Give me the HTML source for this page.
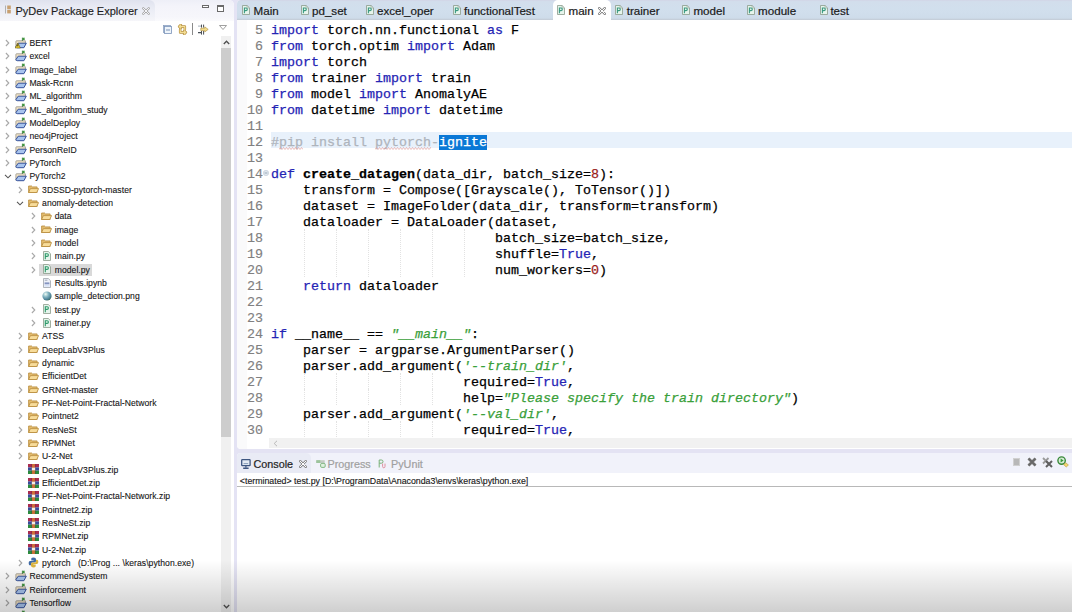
<!DOCTYPE html>
<html><head><meta charset="utf-8">
<style>
*{margin:0;padding:0;box-sizing:border-box}
html,body{width:1072px;height:612px;overflow:hidden;background:#e4e3f4}
body{position:relative;font-family:"Liberation Sans",sans-serif;color:#222}
.a{position:absolute}
svg{display:block}
.tt{font-size:11px;color:#1e1e1e;white-space:nowrap;line-height:12px;-webkit-text-stroke:.15px currentColor}
.tr{font-size:8.6px;color:#141414;white-space:nowrap;line-height:10px;-webkit-text-stroke:.1px #141414;letter-spacing:.05px}
.tab{font-size:11.6px;color:#1a1a1a;white-space:nowrap;line-height:12px;-webkit-text-stroke:.2px currentColor}
.ln{position:absolute;left:0;height:16px;line-height:16px;white-space:pre;font-family:"Liberation Mono",monospace;font-size:13.333px;color:#000;-webkit-text-stroke:.25px currentColor}
.num{color:#808080;-webkit-text-stroke:.15px #808080}
.kw{color:#2424b4}
.str{color:#3aa03a;font-style:italic}
.cm{color:#aeb4bc}
.nm{color:#9a1c1c}
.guide{position:absolute;width:0;border-left:1px dotted #e2e2e2}
</style></head><body>

<div class="a" style="left:0;top:0;width:234px;height:612px;background:#fff;border-top-right-radius:5px;overflow:hidden">
<div class="a" style="left:0;top:0;width:234px;height:21px;background:linear-gradient(#eeeff7,#f4f4fa 30%,#f6f6fb 80%,#fafafd)"></div>
<div class="a" style="left:0;top:0;width:155px;height:21px;background:linear-gradient(#dfe2ee,#e9ebf4 35%,#f1f2f8 80%,#f6f6fa);border-top-right-radius:6px"></div>
<svg class="a" style="left:5px;top:5px" width="6" height="9" viewBox="0 0 6 9"><rect x="0" y=".5" width="1" height="8" fill="#b0b0b0"/><rect x="2.2" y=".5" width="3.6" height="3.6" fill="#c8a070"/><rect x="2.2" y="4.8" width="3.6" height="3.6" fill="#c8a070"/></svg>
<div class="a tt" style="left:15.5px;top:5px">PyDev Package Explorer</div>
<svg class="a" style="left:142px;top:7px" width="8" height="8" viewBox="0 0 8 8"><path d="M1.2 1.2l5.6 5.6M6.8 1.2L1.2 6.8" stroke="#a8a8a8" stroke-width="2.2" stroke-linecap="round"/><path d="M1.2 1.2l5.6 5.6M6.8 1.2L1.2 6.8" stroke="#f4f4f8" stroke-width="1" stroke-linecap="round"/></svg>
<div class="a" style="left:202px;top:5px;width:7px;height:3px;border:1px solid #6a6a6a;background:#fff"></div>
<div class="a" style="left:217px;top:5px;width:7px;height:7px;border:1px solid #6a6a6a;border-top-width:2px;background:#fff"></div>
<svg class="a" style="left:163px;top:25px" width="9" height="9" viewBox="0 0 9 9"><rect x=".5" y=".5" width="7" height="7" fill="#dce8f4" stroke="#8aa0c0" stroke-width=".8"/><rect x="1.5" y="1.5" width="7" height="7" fill="#eef4fa" stroke="#7b93b8" stroke-width=".8"/><path d="M3 5h4" stroke="#7b93b8" stroke-width="1"/></svg>
<svg class="a" style="left:177px;top:23.5px" width="11" height="11" viewBox="0 0 11 11"><path d="M7.8 2.6H2.2M2.2 2.6l1.6-1.6M2.2 2.6l1.6 1.6M7.8 2.6v3M3.2 5.6v2.8M3.2 8.4h5.6M8.8 8.4l-1.6-1.6M8.8 8.4l-1.6 1.6" fill="none" stroke="#b8944a" stroke-width="2.6" stroke-linecap="round" stroke-linejoin="round"/><path d="M7.8 2.6H2.2M2.2 2.6l1.6-1.6M2.2 2.6l1.6 1.6M7.8 2.6v3M3.2 5.6v2.8M3.2 8.4h5.6M8.8 8.4l-1.6-1.6M8.8 8.4l-1.6 1.6" fill="none" stroke="#f4de94" stroke-width="1.2" stroke-linecap="round" stroke-linejoin="round"/></svg>
<div class="a" style="left:192px;top:23px;width:1px;height:12px;background:#8a8a8a"></div>
<svg class="a" style="left:198px;top:24px" width="11" height="11" viewBox="0 0 11 11"><path d="M0 2.2h4" stroke="#b8c0c8" stroke-width="1.2"/><path d="M0 8.6h4" stroke="#4a5058" stroke-width="1.2"/><path d="M3.5 .6v3M3.5 7v3.6M5.6 .6v3M5.6 7v3.6" stroke="#4a5058" stroke-width="1"/><path d="M2.8 4.2h4V2.9l3.4 2.5-3.4 2.5V6.6h-4z" fill="#f2dc8a" stroke="#b89a48" stroke-width=".7"/></svg>
<svg class="a" style="left:219px;top:25px" width="8" height="5" viewBox="0 0 8 5"><path d="M.5.5h7L4 4.5z" fill="#fff" stroke="#888" stroke-width=".8"/></svg>
<svg class="a" style="left:5.30px;top:39.15px" width="5" height="8" viewBox="0 0 5 8"><path d="M.9 1l2.9 3-2.9 3" fill="none" stroke="#a8a8a8" stroke-width="1.1"/></svg>
<div class="a" style="left:14.90px;top:36.55px"><svg width="12" height="12" viewBox="0 0 12 12"><path d="M.9 10.4V4.4q0-.6.6-.6h8.9v3" fill="#f3e4c4" stroke="#a09c94" stroke-width=".9"/><path d="M7.4 .7v3.2" stroke="#3a7a3a" stroke-width=".9"/><path d="M7.6 .7h2.4l-.6 1.2.6 1.2H7.6z" fill="#40963e"/><path d="M3.2 6.2h8.1l-2.4 4.5H2.2q-1.2 0-1.2-1.2z" fill="#a8c4ee" stroke="#34509a" stroke-width="1"/><path d="M2.8 6L5.4 11H.2z" fill="#f2d230" stroke="#6a5a10" stroke-width=".6"/><path d="M2.8 7.4v2" stroke="#222" stroke-width=".9"/></svg></div>
<div class="a tr" style="left:29.40px;top:37.95px">BERT</div>
<svg class="a" style="left:5.30px;top:52.48px" width="5" height="8" viewBox="0 0 5 8"><path d="M.9 1l2.9 3-2.9 3" fill="none" stroke="#a8a8a8" stroke-width="1.1"/></svg>
<div class="a" style="left:14.90px;top:49.88px"><svg width="12" height="12" viewBox="0 0 12 12"><path d="M.9 10.4V4.4q0-.6.6-.6h8.9v3" fill="#f3e4c4" stroke="#a09c94" stroke-width=".9"/><path d="M7.4 .7v3.2" stroke="#3a7a3a" stroke-width=".9"/><path d="M7.6 .7h2.4l-.6 1.2.6 1.2H7.6z" fill="#40963e"/><path d="M3.2 6.2h8.1l-2.4 4.5H2.2q-1.2 0-1.2-1.2z" fill="#a8c4ee" stroke="#34509a" stroke-width="1"/></svg></div>
<div class="a tr" style="left:29.40px;top:51.28px">excel</div>
<svg class="a" style="left:5.30px;top:65.82px" width="5" height="8" viewBox="0 0 5 8"><path d="M.9 1l2.9 3-2.9 3" fill="none" stroke="#a8a8a8" stroke-width="1.1"/></svg>
<div class="a" style="left:14.90px;top:63.22px"><svg width="12" height="12" viewBox="0 0 12 12"><path d="M.9 10.4V4.4q0-.6.6-.6h8.9v3" fill="#f3e4c4" stroke="#a09c94" stroke-width=".9"/><path d="M7.4 .7v3.2" stroke="#3a7a3a" stroke-width=".9"/><path d="M7.6 .7h2.4l-.6 1.2.6 1.2H7.6z" fill="#40963e"/><path d="M3.2 6.2h8.1l-2.4 4.5H2.2q-1.2 0-1.2-1.2z" fill="#a8c4ee" stroke="#34509a" stroke-width="1"/></svg></div>
<div class="a tr" style="left:29.40px;top:64.62px">Image_label</div>
<svg class="a" style="left:5.30px;top:79.15px" width="5" height="8" viewBox="0 0 5 8"><path d="M.9 1l2.9 3-2.9 3" fill="none" stroke="#a8a8a8" stroke-width="1.1"/></svg>
<div class="a" style="left:14.90px;top:76.55px"><svg width="12" height="12" viewBox="0 0 12 12"><path d="M.9 10.4V4.4q0-.6.6-.6h8.9v3" fill="#f3e4c4" stroke="#a09c94" stroke-width=".9"/><path d="M7.4 .7v3.2" stroke="#3a7a3a" stroke-width=".9"/><path d="M7.6 .7h2.4l-.6 1.2.6 1.2H7.6z" fill="#40963e"/><path d="M3.2 6.2h8.1l-2.4 4.5H2.2q-1.2 0-1.2-1.2z" fill="#a8c4ee" stroke="#34509a" stroke-width="1"/></svg></div>
<div class="a tr" style="left:29.40px;top:77.95px">Mask-Rcnn</div>
<svg class="a" style="left:5.30px;top:92.48px" width="5" height="8" viewBox="0 0 5 8"><path d="M.9 1l2.9 3-2.9 3" fill="none" stroke="#a8a8a8" stroke-width="1.1"/></svg>
<div class="a" style="left:14.90px;top:89.88px"><svg width="12" height="12" viewBox="0 0 12 12"><path d="M.9 10.4V4.4q0-.6.6-.6h8.9v3" fill="#f3e4c4" stroke="#a09c94" stroke-width=".9"/><path d="M7.4 .7v3.2" stroke="#3a7a3a" stroke-width=".9"/><path d="M7.6 .7h2.4l-.6 1.2.6 1.2H7.6z" fill="#40963e"/><path d="M3.2 6.2h8.1l-2.4 4.5H2.2q-1.2 0-1.2-1.2z" fill="#a8c4ee" stroke="#34509a" stroke-width="1"/></svg></div>
<div class="a tr" style="left:29.40px;top:91.28px">ML_algorithm</div>
<svg class="a" style="left:5.30px;top:105.82px" width="5" height="8" viewBox="0 0 5 8"><path d="M.9 1l2.9 3-2.9 3" fill="none" stroke="#a8a8a8" stroke-width="1.1"/></svg>
<div class="a" style="left:14.90px;top:103.22px"><svg width="12" height="12" viewBox="0 0 12 12"><path d="M.9 10.4V4.4q0-.6.6-.6h8.9v3" fill="#f3e4c4" stroke="#a09c94" stroke-width=".9"/><path d="M7.4 .7v3.2" stroke="#3a7a3a" stroke-width=".9"/><path d="M7.6 .7h2.4l-.6 1.2.6 1.2H7.6z" fill="#40963e"/><path d="M3.2 6.2h8.1l-2.4 4.5H2.2q-1.2 0-1.2-1.2z" fill="#a8c4ee" stroke="#34509a" stroke-width="1"/></svg></div>
<div class="a tr" style="left:29.40px;top:104.62px">ML_algorithm_study</div>
<svg class="a" style="left:5.30px;top:119.15px" width="5" height="8" viewBox="0 0 5 8"><path d="M.9 1l2.9 3-2.9 3" fill="none" stroke="#a8a8a8" stroke-width="1.1"/></svg>
<div class="a" style="left:14.90px;top:116.55px"><svg width="12" height="12" viewBox="0 0 12 12"><path d="M.9 10.4V4.4q0-.6.6-.6h8.9v3" fill="#f3e4c4" stroke="#a09c94" stroke-width=".9"/><path d="M7.4 .7v3.2" stroke="#3a7a3a" stroke-width=".9"/><path d="M7.6 .7h2.4l-.6 1.2.6 1.2H7.6z" fill="#40963e"/><path d="M3.2 6.2h8.1l-2.4 4.5H2.2q-1.2 0-1.2-1.2z" fill="#a8c4ee" stroke="#34509a" stroke-width="1"/></svg></div>
<div class="a tr" style="left:29.40px;top:117.95px">ModelDeploy</div>
<svg class="a" style="left:5.30px;top:132.48px" width="5" height="8" viewBox="0 0 5 8"><path d="M.9 1l2.9 3-2.9 3" fill="none" stroke="#a8a8a8" stroke-width="1.1"/></svg>
<div class="a" style="left:14.90px;top:129.88px"><svg width="12" height="12" viewBox="0 0 12 12"><path d="M.9 10.4V4.4q0-.6.6-.6h8.9v3" fill="#f3e4c4" stroke="#a09c94" stroke-width=".9"/><path d="M7.4 .7v3.2" stroke="#3a7a3a" stroke-width=".9"/><path d="M7.6 .7h2.4l-.6 1.2.6 1.2H7.6z" fill="#40963e"/><path d="M3.2 6.2h8.1l-2.4 4.5H2.2q-1.2 0-1.2-1.2z" fill="#a8c4ee" stroke="#34509a" stroke-width="1"/></svg></div>
<div class="a tr" style="left:29.40px;top:131.28px">neo4jProject</div>
<svg class="a" style="left:5.30px;top:145.81px" width="5" height="8" viewBox="0 0 5 8"><path d="M.9 1l2.9 3-2.9 3" fill="none" stroke="#a8a8a8" stroke-width="1.1"/></svg>
<div class="a" style="left:14.90px;top:143.21px"><svg width="12" height="12" viewBox="0 0 12 12"><path d="M.9 10.4V4.4q0-.6.6-.6h8.9v3" fill="#f3e4c4" stroke="#a09c94" stroke-width=".9"/><path d="M7.4 .7v3.2" stroke="#3a7a3a" stroke-width=".9"/><path d="M7.6 .7h2.4l-.6 1.2.6 1.2H7.6z" fill="#40963e"/><path d="M3.2 6.2h8.1l-2.4 4.5H2.2q-1.2 0-1.2-1.2z" fill="#a8c4ee" stroke="#34509a" stroke-width="1"/></svg></div>
<div class="a tr" style="left:29.40px;top:144.61px">PersonReID</div>
<svg class="a" style="left:5.30px;top:159.15px" width="5" height="8" viewBox="0 0 5 8"><path d="M.9 1l2.9 3-2.9 3" fill="none" stroke="#a8a8a8" stroke-width="1.1"/></svg>
<div class="a" style="left:14.90px;top:156.55px"><svg width="12" height="12" viewBox="0 0 12 12"><path d="M.9 10.4V4.4q0-.6.6-.6h8.9v3" fill="#f3e4c4" stroke="#a09c94" stroke-width=".9"/><path d="M7.4 .7v3.2" stroke="#3a7a3a" stroke-width=".9"/><path d="M7.6 .7h2.4l-.6 1.2.6 1.2H7.6z" fill="#40963e"/><path d="M3.2 6.2h8.1l-2.4 4.5H2.2q-1.2 0-1.2-1.2z" fill="#a8c4ee" stroke="#34509a" stroke-width="1"/></svg></div>
<div class="a tr" style="left:29.40px;top:157.95px">PyTorch</div>
<svg class="a" style="left:3.80px;top:173.88px" width="8" height="5" viewBox="0 0 8 5"><path d="M1 .9l3 2.9 3-2.9" fill="none" stroke="#555" stroke-width="1.1"/></svg>
<div class="a" style="left:14.90px;top:169.88px"><svg width="12" height="12" viewBox="0 0 12 12"><path d="M.9 10.4V4.4q0-.6.6-.6h8.9v3" fill="#f3e4c4" stroke="#a09c94" stroke-width=".9"/><path d="M7.4 .7v3.2" stroke="#3a7a3a" stroke-width=".9"/><path d="M7.6 .7h2.4l-.6 1.2.6 1.2H7.6z" fill="#40963e"/><path d="M3.2 6.2h8.1l-2.4 4.5H2.2q-1.2 0-1.2-1.2z" fill="#a8c4ee" stroke="#34509a" stroke-width="1"/></svg></div>
<div class="a tr" style="left:29.40px;top:171.28px">PyTorch2</div>
<svg class="a" style="left:17.95px;top:185.81px" width="5" height="8" viewBox="0 0 5 8"><path d="M.9 1l2.9 3-2.9 3" fill="none" stroke="#a8a8a8" stroke-width="1.1"/></svg>
<div class="a" style="left:28.45px;top:185.21px"><svg width="11" height="8" viewBox="0 0 11 8"><path d="M.6 1h3l.9.9h4.6v5.6H.6z" fill="#e2bb6e" stroke="#b88c3c" stroke-width=".8"/><path d="M2.4 3.6h8.2l-1.9 3.9H.6z" fill="#f7dc9a" stroke="#b88c3c" stroke-width=".8"/></svg></div>
<div class="a tr" style="left:42.05px;top:184.61px">3DSSD-pytorch-master</div>
<svg class="a" style="left:16.45px;top:200.55px" width="8" height="5" viewBox="0 0 8 5"><path d="M1 .9l3 2.9 3-2.9" fill="none" stroke="#555" stroke-width="1.1"/></svg>
<div class="a" style="left:28.45px;top:198.55px"><svg width="11" height="8" viewBox="0 0 11 8"><path d="M.6 1h3l.9.9h4.6v5.6H.6z" fill="#e2bb6e" stroke="#b88c3c" stroke-width=".8"/><path d="M2.4 3.6h8.2l-1.9 3.9H.6z" fill="#f7dc9a" stroke="#b88c3c" stroke-width=".8"/></svg></div>
<div class="a tr" style="left:42.05px;top:197.95px">anomaly-detection</div>
<svg class="a" style="left:30.60px;top:212.48px" width="5" height="8" viewBox="0 0 5 8"><path d="M.9 1l2.9 3-2.9 3" fill="none" stroke="#a8a8a8" stroke-width="1.1"/></svg>
<div class="a" style="left:41.10px;top:211.88px"><svg width="11" height="8" viewBox="0 0 11 8"><path d="M.6 1h3l.9.9h4.6v5.6H.6z" fill="#e2bb6e" stroke="#b88c3c" stroke-width=".8"/><path d="M2.4 3.6h8.2l-1.9 3.9H.6z" fill="#f7dc9a" stroke="#b88c3c" stroke-width=".8"/></svg></div>
<div class="a tr" style="left:54.70px;top:211.28px">data</div>
<svg class="a" style="left:30.60px;top:225.81px" width="5" height="8" viewBox="0 0 5 8"><path d="M.9 1l2.9 3-2.9 3" fill="none" stroke="#a8a8a8" stroke-width="1.1"/></svg>
<div class="a" style="left:41.10px;top:225.21px"><svg width="11" height="8" viewBox="0 0 11 8"><path d="M.6 1h3l.9.9h4.6v5.6H.6z" fill="#e2bb6e" stroke="#b88c3c" stroke-width=".8"/><path d="M2.4 3.6h8.2l-1.9 3.9H.6z" fill="#f7dc9a" stroke="#b88c3c" stroke-width=".8"/></svg></div>
<div class="a tr" style="left:54.70px;top:224.61px">image</div>
<svg class="a" style="left:30.60px;top:239.15px" width="5" height="8" viewBox="0 0 5 8"><path d="M.9 1l2.9 3-2.9 3" fill="none" stroke="#a8a8a8" stroke-width="1.1"/></svg>
<div class="a" style="left:41.10px;top:238.55px"><svg width="11" height="8" viewBox="0 0 11 8"><path d="M.6 1h3l.9.9h4.6v5.6H.6z" fill="#e2bb6e" stroke="#b88c3c" stroke-width=".8"/><path d="M2.4 3.6h8.2l-1.9 3.9H.6z" fill="#f7dc9a" stroke="#b88c3c" stroke-width=".8"/></svg></div>
<div class="a tr" style="left:54.70px;top:237.94px">model</div>
<svg class="a" style="left:30.60px;top:252.48px" width="5" height="8" viewBox="0 0 5 8"><path d="M.9 1l2.9 3-2.9 3" fill="none" stroke="#a8a8a8" stroke-width="1.1"/></svg>
<div class="a" style="left:42.50px;top:251.08px"><svg width="8" height="10" viewBox="0 0 8 10"><path d="M.5.5h4.8l2.2 2.2v6.8H.5z" fill="#e6f4ec" stroke="#8c9c8c" stroke-width=".8"/><path d="M2.3 8.2V2.8h1.8a1.3 1.3 0 010 2.6H2.3" fill="none" stroke="#2e9a6a" stroke-width="1.1"/></svg></div>
<div class="a tr" style="left:54.70px;top:251.28px">main.py</div>
<div class="a" style="left:39.2px;top:263.61px;width:53px;height:12.6px;background:#d9d9d9"></div>
<svg class="a" style="left:30.60px;top:265.81px" width="5" height="8" viewBox="0 0 5 8"><path d="M.9 1l2.9 3-2.9 3" fill="none" stroke="#a8a8a8" stroke-width="1.1"/></svg>
<div class="a" style="left:42.50px;top:264.41px"><svg width="8" height="10" viewBox="0 0 8 10"><path d="M.5.5h4.8l2.2 2.2v6.8H.5z" fill="#e6f4ec" stroke="#8c9c8c" stroke-width=".8"/><path d="M2.3 8.2V2.8h1.8a1.3 1.3 0 010 2.6H2.3" fill="none" stroke="#2e9a6a" stroke-width="1.1"/></svg></div>
<div class="a tr" style="left:54.70px;top:264.61px">model.py</div>
<div class="a" style="left:42.50px;top:277.74px"><svg width="8" height="10" viewBox="0 0 8 10"><path d="M.5.5h4.8l2.2 2.2v6.8H.5z" fill="#eef1f8" stroke="#a0a4ac" stroke-width=".8"/><path d="M1.8 2.2h2.6" stroke="#9098a8" stroke-width=".8"/><path d="M1.6 4.4h4.8v2H1.6z" fill="#8494c0"/><path d="M1.6 6.6h4.8v2H1.6z" fill="#d8e4f8"/></svg></div>
<div class="a tr" style="left:54.70px;top:277.94px">Results.ipynb</div>
<div class="a" style="left:41.70px;top:291.28px"><svg width="10" height="10" viewBox="0 0 10 10"><defs><radialGradient id="gb" cx=".35" cy=".3" r=".75"><stop offset="0" stop-color="#f0fbf4"/><stop offset=".4" stop-color="#88b8c4"/><stop offset=".8" stop-color="#4a7f94"/><stop offset="1" stop-color="#3a6a58"/></radialGradient></defs><circle cx="5" cy="5" r="4.6" fill="url(#gb)"/></svg></div>
<div class="a tr" style="left:54.70px;top:291.28px">sample_detection.png</div>
<svg class="a" style="left:30.60px;top:305.81px" width="5" height="8" viewBox="0 0 5 8"><path d="M.9 1l2.9 3-2.9 3" fill="none" stroke="#a8a8a8" stroke-width="1.1"/></svg>
<div class="a" style="left:42.50px;top:304.41px"><svg width="8" height="10" viewBox="0 0 8 10"><path d="M.5.5h4.8l2.2 2.2v6.8H.5z" fill="#e6f4ec" stroke="#8c9c8c" stroke-width=".8"/><path d="M2.3 8.2V2.8h1.8a1.3 1.3 0 010 2.6H2.3" fill="none" stroke="#2e9a6a" stroke-width="1.1"/></svg></div>
<div class="a tr" style="left:54.70px;top:304.61px">test.py</div>
<svg class="a" style="left:30.60px;top:319.14px" width="5" height="8" viewBox="0 0 5 8"><path d="M.9 1l2.9 3-2.9 3" fill="none" stroke="#a8a8a8" stroke-width="1.1"/></svg>
<div class="a" style="left:42.50px;top:317.74px"><svg width="8" height="10" viewBox="0 0 8 10"><path d="M.5.5h4.8l2.2 2.2v6.8H.5z" fill="#e6f4ec" stroke="#8c9c8c" stroke-width=".8"/><path d="M2.3 8.2V2.8h1.8a1.3 1.3 0 010 2.6H2.3" fill="none" stroke="#2e9a6a" stroke-width="1.1"/></svg></div>
<div class="a tr" style="left:54.70px;top:317.94px">trainer.py</div>
<svg class="a" style="left:17.95px;top:332.48px" width="5" height="8" viewBox="0 0 5 8"><path d="M.9 1l2.9 3-2.9 3" fill="none" stroke="#a8a8a8" stroke-width="1.1"/></svg>
<div class="a" style="left:28.45px;top:331.88px"><svg width="11" height="8" viewBox="0 0 11 8"><path d="M.6 1h3l.9.9h4.6v5.6H.6z" fill="#e2bb6e" stroke="#b88c3c" stroke-width=".8"/><path d="M2.4 3.6h8.2l-1.9 3.9H.6z" fill="#f7dc9a" stroke="#b88c3c" stroke-width=".8"/></svg></div>
<div class="a tr" style="left:42.05px;top:331.28px">ATSS</div>
<svg class="a" style="left:17.95px;top:345.81px" width="5" height="8" viewBox="0 0 5 8"><path d="M.9 1l2.9 3-2.9 3" fill="none" stroke="#a8a8a8" stroke-width="1.1"/></svg>
<div class="a" style="left:28.45px;top:345.21px"><svg width="11" height="8" viewBox="0 0 11 8"><path d="M.6 1h3l.9.9h4.6v5.6H.6z" fill="#e2bb6e" stroke="#b88c3c" stroke-width=".8"/><path d="M2.4 3.6h8.2l-1.9 3.9H.6z" fill="#f7dc9a" stroke="#b88c3c" stroke-width=".8"/></svg></div>
<div class="a tr" style="left:42.05px;top:344.61px">DeepLabV3Plus</div>
<svg class="a" style="left:17.95px;top:359.14px" width="5" height="8" viewBox="0 0 5 8"><path d="M.9 1l2.9 3-2.9 3" fill="none" stroke="#a8a8a8" stroke-width="1.1"/></svg>
<div class="a" style="left:28.45px;top:358.54px"><svg width="11" height="8" viewBox="0 0 11 8"><path d="M.6 1h3l.9.9h4.6v5.6H.6z" fill="#e2bb6e" stroke="#b88c3c" stroke-width=".8"/><path d="M2.4 3.6h8.2l-1.9 3.9H.6z" fill="#f7dc9a" stroke="#b88c3c" stroke-width=".8"/></svg></div>
<div class="a tr" style="left:42.05px;top:357.94px">dynamic</div>
<svg class="a" style="left:17.95px;top:372.47px" width="5" height="8" viewBox="0 0 5 8"><path d="M.9 1l2.9 3-2.9 3" fill="none" stroke="#a8a8a8" stroke-width="1.1"/></svg>
<div class="a" style="left:28.45px;top:371.88px"><svg width="11" height="8" viewBox="0 0 11 8"><path d="M.6 1h3l.9.9h4.6v5.6H.6z" fill="#e2bb6e" stroke="#b88c3c" stroke-width=".8"/><path d="M2.4 3.6h8.2l-1.9 3.9H.6z" fill="#f7dc9a" stroke="#b88c3c" stroke-width=".8"/></svg></div>
<div class="a tr" style="left:42.05px;top:371.27px">EfficientDet</div>
<svg class="a" style="left:17.95px;top:385.81px" width="5" height="8" viewBox="0 0 5 8"><path d="M.9 1l2.9 3-2.9 3" fill="none" stroke="#a8a8a8" stroke-width="1.1"/></svg>
<div class="a" style="left:28.45px;top:385.21px"><svg width="11" height="8" viewBox="0 0 11 8"><path d="M.6 1h3l.9.9h4.6v5.6H.6z" fill="#e2bb6e" stroke="#b88c3c" stroke-width=".8"/><path d="M2.4 3.6h8.2l-1.9 3.9H.6z" fill="#f7dc9a" stroke="#b88c3c" stroke-width=".8"/></svg></div>
<div class="a tr" style="left:42.05px;top:384.61px">GRNet-master</div>
<svg class="a" style="left:17.95px;top:399.14px" width="5" height="8" viewBox="0 0 5 8"><path d="M.9 1l2.9 3-2.9 3" fill="none" stroke="#a8a8a8" stroke-width="1.1"/></svg>
<div class="a" style="left:28.45px;top:398.54px"><svg width="11" height="8" viewBox="0 0 11 8"><path d="M.6 1h3l.9.9h4.6v5.6H.6z" fill="#e2bb6e" stroke="#b88c3c" stroke-width=".8"/><path d="M2.4 3.6h8.2l-1.9 3.9H.6z" fill="#f7dc9a" stroke="#b88c3c" stroke-width=".8"/></svg></div>
<div class="a tr" style="left:42.05px;top:397.94px">PF-Net-Point-Fractal-Network</div>
<svg class="a" style="left:17.95px;top:412.47px" width="5" height="8" viewBox="0 0 5 8"><path d="M.9 1l2.9 3-2.9 3" fill="none" stroke="#a8a8a8" stroke-width="1.1"/></svg>
<div class="a" style="left:28.45px;top:411.87px"><svg width="11" height="8" viewBox="0 0 11 8"><path d="M.6 1h3l.9.9h4.6v5.6H.6z" fill="#e2bb6e" stroke="#b88c3c" stroke-width=".8"/><path d="M2.4 3.6h8.2l-1.9 3.9H.6z" fill="#f7dc9a" stroke="#b88c3c" stroke-width=".8"/></svg></div>
<div class="a tr" style="left:42.05px;top:411.27px">Pointnet2</div>
<svg class="a" style="left:17.95px;top:425.81px" width="5" height="8" viewBox="0 0 5 8"><path d="M.9 1l2.9 3-2.9 3" fill="none" stroke="#a8a8a8" stroke-width="1.1"/></svg>
<div class="a" style="left:28.45px;top:425.21px"><svg width="11" height="8" viewBox="0 0 11 8"><path d="M.6 1h3l.9.9h4.6v5.6H.6z" fill="#e2bb6e" stroke="#b88c3c" stroke-width=".8"/><path d="M2.4 3.6h8.2l-1.9 3.9H.6z" fill="#f7dc9a" stroke="#b88c3c" stroke-width=".8"/></svg></div>
<div class="a tr" style="left:42.05px;top:424.61px">ResNeSt</div>
<svg class="a" style="left:17.95px;top:439.14px" width="5" height="8" viewBox="0 0 5 8"><path d="M.9 1l2.9 3-2.9 3" fill="none" stroke="#a8a8a8" stroke-width="1.1"/></svg>
<div class="a" style="left:28.45px;top:438.54px"><svg width="11" height="8" viewBox="0 0 11 8"><path d="M.6 1h3l.9.9h4.6v5.6H.6z" fill="#e2bb6e" stroke="#b88c3c" stroke-width=".8"/><path d="M2.4 3.6h8.2l-1.9 3.9H.6z" fill="#f7dc9a" stroke="#b88c3c" stroke-width=".8"/></svg></div>
<div class="a tr" style="left:42.05px;top:437.94px">RPMNet</div>
<svg class="a" style="left:17.95px;top:452.47px" width="5" height="8" viewBox="0 0 5 8"><path d="M.9 1l2.9 3-2.9 3" fill="none" stroke="#a8a8a8" stroke-width="1.1"/></svg>
<div class="a" style="left:28.45px;top:451.87px"><svg width="11" height="8" viewBox="0 0 11 8"><path d="M.6 1h3l.9.9h4.6v5.6H.6z" fill="#e2bb6e" stroke="#b88c3c" stroke-width=".8"/><path d="M2.4 3.6h8.2l-1.9 3.9H.6z" fill="#f7dc9a" stroke="#b88c3c" stroke-width=".8"/></svg></div>
<div class="a tr" style="left:42.05px;top:451.27px">U-2-Net</div>
<div class="a" style="left:27.85px;top:464.41px"><svg width="11" height="10" viewBox="0 0 11 10"><rect x="0" y="0" width="11" height="3.4" fill="#a82c50"/><rect x="0" y="3.4" width="11" height="3.3" fill="#3a4c9c"/><rect x="0" y="6.7" width="11" height="3.3" fill="#2c8a3c"/><path d="M3.6 0v10M7.4 0v10" stroke="#5a2a3a" stroke-width=".5" opacity=".6"/><rect x="4.1" y="0" width="2.8" height="10" fill="#d0703a"/><path d="M3.8 3.7h3.4v2.6H3.8z" fill="#f4f0e4"/></svg></div>
<div class="a tr" style="left:42.05px;top:464.61px">DeepLabV3Plus.zip</div>
<div class="a" style="left:27.85px;top:477.74px"><svg width="11" height="10" viewBox="0 0 11 10"><rect x="0" y="0" width="11" height="3.4" fill="#a82c50"/><rect x="0" y="3.4" width="11" height="3.3" fill="#3a4c9c"/><rect x="0" y="6.7" width="11" height="3.3" fill="#2c8a3c"/><path d="M3.6 0v10M7.4 0v10" stroke="#5a2a3a" stroke-width=".5" opacity=".6"/><rect x="4.1" y="0" width="2.8" height="10" fill="#d0703a"/><path d="M3.8 3.7h3.4v2.6H3.8z" fill="#f4f0e4"/></svg></div>
<div class="a tr" style="left:42.05px;top:477.94px">EfficientDet.zip</div>
<div class="a" style="left:27.85px;top:491.07px"><svg width="11" height="10" viewBox="0 0 11 10"><rect x="0" y="0" width="11" height="3.4" fill="#a82c50"/><rect x="0" y="3.4" width="11" height="3.3" fill="#3a4c9c"/><rect x="0" y="6.7" width="11" height="3.3" fill="#2c8a3c"/><path d="M3.6 0v10M7.4 0v10" stroke="#5a2a3a" stroke-width=".5" opacity=".6"/><rect x="4.1" y="0" width="2.8" height="10" fill="#d0703a"/><path d="M3.8 3.7h3.4v2.6H3.8z" fill="#f4f0e4"/></svg></div>
<div class="a tr" style="left:42.05px;top:491.27px">PF-Net-Point-Fractal-Network.zip</div>
<div class="a" style="left:27.85px;top:504.40px"><svg width="11" height="10" viewBox="0 0 11 10"><rect x="0" y="0" width="11" height="3.4" fill="#a82c50"/><rect x="0" y="3.4" width="11" height="3.3" fill="#3a4c9c"/><rect x="0" y="6.7" width="11" height="3.3" fill="#2c8a3c"/><path d="M3.6 0v10M7.4 0v10" stroke="#5a2a3a" stroke-width=".5" opacity=".6"/><rect x="4.1" y="0" width="2.8" height="10" fill="#d0703a"/><path d="M3.8 3.7h3.4v2.6H3.8z" fill="#f4f0e4"/></svg></div>
<div class="a tr" style="left:42.05px;top:504.60px">Pointnet2.zip</div>
<div class="a" style="left:27.85px;top:517.74px"><svg width="11" height="10" viewBox="0 0 11 10"><rect x="0" y="0" width="11" height="3.4" fill="#a82c50"/><rect x="0" y="3.4" width="11" height="3.3" fill="#3a4c9c"/><rect x="0" y="6.7" width="11" height="3.3" fill="#2c8a3c"/><path d="M3.6 0v10M7.4 0v10" stroke="#5a2a3a" stroke-width=".5" opacity=".6"/><rect x="4.1" y="0" width="2.8" height="10" fill="#d0703a"/><path d="M3.8 3.7h3.4v2.6H3.8z" fill="#f4f0e4"/></svg></div>
<div class="a tr" style="left:42.05px;top:517.94px">ResNeSt.zip</div>
<div class="a" style="left:27.85px;top:531.07px"><svg width="11" height="10" viewBox="0 0 11 10"><rect x="0" y="0" width="11" height="3.4" fill="#a82c50"/><rect x="0" y="3.4" width="11" height="3.3" fill="#3a4c9c"/><rect x="0" y="6.7" width="11" height="3.3" fill="#2c8a3c"/><path d="M3.6 0v10M7.4 0v10" stroke="#5a2a3a" stroke-width=".5" opacity=".6"/><rect x="4.1" y="0" width="2.8" height="10" fill="#d0703a"/><path d="M3.8 3.7h3.4v2.6H3.8z" fill="#f4f0e4"/></svg></div>
<div class="a tr" style="left:42.05px;top:531.27px">RPMNet.zip</div>
<div class="a" style="left:27.85px;top:544.40px"><svg width="11" height="10" viewBox="0 0 11 10"><rect x="0" y="0" width="11" height="3.4" fill="#a82c50"/><rect x="0" y="3.4" width="11" height="3.3" fill="#3a4c9c"/><rect x="0" y="6.7" width="11" height="3.3" fill="#2c8a3c"/><path d="M3.6 0v10M7.4 0v10" stroke="#5a2a3a" stroke-width=".5" opacity=".6"/><rect x="4.1" y="0" width="2.8" height="10" fill="#d0703a"/><path d="M3.8 3.7h3.4v2.6H3.8z" fill="#f4f0e4"/></svg></div>
<div class="a tr" style="left:42.05px;top:544.60px">U-2-Net.zip</div>
<svg class="a" style="left:17.95px;top:559.14px" width="5" height="8" viewBox="0 0 5 8"><path d="M.9 1l2.9 3-2.9 3" fill="none" stroke="#a8a8a8" stroke-width="1.1"/></svg>
<div class="a" style="left:27.85px;top:557.14px"><svg width="11" height="11" viewBox="0 0 11 11"><path d="M5.5.6C3.2.6 3.3 1.6 3.3 2.5v1.1h2.3v.5H2.2C1.1 4.1.7 5 .7 6.2s.5 2.1 1.4 2.1h.9V7.1c0-.9.7-1.6 1.6-1.6h2c.8 0 1.4-.6 1.4-1.4V2.5C8 1.6 7.3.6 5.5.6z" fill="#3f6aa6"/><path d="M5.5 10.4c2.3 0 2.2-1 2.2-1.9V7.4H5.4v-.5h3.4c1.1 0 1.5-.9 1.5-2.1S9.8 2.7 8.9 2.7H8v1.2c0 .9-.7 1.6-1.6 1.6h-2c-.8 0-1.4.6-1.4 1.4v1.6c0 .9.7 1.9 2.5 1.9z" fill="#dcb440"/></svg></div>
<div class="a tr" style="left:42.05px;top:557.94px">pytorch&nbsp;&nbsp;&nbsp;(D:\Prog ... \keras\python.exe)</div>
<svg class="a" style="left:5.30px;top:572.47px" width="5" height="8" viewBox="0 0 5 8"><path d="M.9 1l2.9 3-2.9 3" fill="none" stroke="#a8a8a8" stroke-width="1.1"/></svg>
<div class="a" style="left:14.90px;top:569.87px"><svg width="12" height="12" viewBox="0 0 12 12"><path d="M.9 10.4V4.4q0-.6.6-.6h8.9v3" fill="#f3e4c4" stroke="#a09c94" stroke-width=".9"/><path d="M7.4 .7v3.2" stroke="#3a7a3a" stroke-width=".9"/><path d="M7.6 .7h2.4l-.6 1.2.6 1.2H7.6z" fill="#40963e"/><path d="M3.2 6.2h8.1l-2.4 4.5H2.2q-1.2 0-1.2-1.2z" fill="#a8c4ee" stroke="#34509a" stroke-width="1"/></svg></div>
<div class="a tr" style="left:29.40px;top:571.27px">RecommendSystem</div>
<svg class="a" style="left:5.30px;top:585.80px" width="5" height="8" viewBox="0 0 5 8"><path d="M.9 1l2.9 3-2.9 3" fill="none" stroke="#a8a8a8" stroke-width="1.1"/></svg>
<div class="a" style="left:14.90px;top:583.20px"><svg width="12" height="12" viewBox="0 0 12 12"><path d="M.9 10.4V4.4q0-.6.6-.6h8.9v3" fill="#f3e4c4" stroke="#a09c94" stroke-width=".9"/><path d="M7.4 .7v3.2" stroke="#3a7a3a" stroke-width=".9"/><path d="M7.6 .7h2.4l-.6 1.2.6 1.2H7.6z" fill="#40963e"/><path d="M3.2 6.2h8.1l-2.4 4.5H2.2q-1.2 0-1.2-1.2z" fill="#a8c4ee" stroke="#34509a" stroke-width="1"/></svg></div>
<div class="a tr" style="left:29.40px;top:584.60px">Reinforcement</div>
<svg class="a" style="left:5.30px;top:599.14px" width="5" height="8" viewBox="0 0 5 8"><path d="M.9 1l2.9 3-2.9 3" fill="none" stroke="#a8a8a8" stroke-width="1.1"/></svg>
<div class="a" style="left:14.90px;top:596.54px"><svg width="12" height="12" viewBox="0 0 12 12"><path d="M.9 10.4V4.4q0-.6.6-.6h8.9v3" fill="#f3e4c4" stroke="#a09c94" stroke-width=".9"/><path d="M7.4 .7v3.2" stroke="#3a7a3a" stroke-width=".9"/><path d="M7.6 .7h2.4l-.6 1.2.6 1.2H7.6z" fill="#40963e"/><path d="M3.2 6.2h8.1l-2.4 4.5H2.2q-1.2 0-1.2-1.2z" fill="#a8c4ee" stroke="#34509a" stroke-width="1"/></svg></div>
<div class="a tr" style="left:29.40px;top:597.94px">Tensorflow</div>
<svg class="a" style="left:5.30px;top:612.47px" width="5" height="8" viewBox="0 0 5 8"><path d="M.9 1l2.9 3-2.9 3" fill="none" stroke="#a8a8a8" stroke-width="1.1"/></svg>
<div class="a" style="left:14.90px;top:609.87px"><svg width="12" height="12" viewBox="0 0 12 12"><path d="M.9 10.4V4.4q0-.6.6-.6h8.9v3" fill="#f3e4c4" stroke="#a09c94" stroke-width=".9"/><path d="M7.4 .7v3.2" stroke="#3a7a3a" stroke-width=".9"/><path d="M7.6 .7h2.4l-.6 1.2.6 1.2H7.6z" fill="#40963e"/><path d="M3.2 6.2h8.1l-2.4 4.5H2.2q-1.2 0-1.2-1.2z" fill="#a8c4ee" stroke="#34509a" stroke-width="1"/></svg></div>
<div class="a tr" style="left:29.40px;top:611.27px"></div>
<div class="a" style="left:221px;top:36px;width:9.8px;height:576px;background:#f0f0f0"></div>
<div class="a" style="left:221px;top:48px;width:9.8px;height:389px;background:#cdcdcd"></div>
<svg class="a" style="left:222.5px;top:40px" width="7" height="5" viewBox="0 0 7 5"><path d="M.8 4L3.5 1.2 6.2 4" fill="none" stroke="#505050" stroke-width="1.3"/></svg>
<svg class="a" style="left:222.5px;top:604px" width="7" height="5" viewBox="0 0 7 5"><path d="M.8 1L3.5 3.8 6.2 1" fill="none" stroke="#505050" stroke-width="1.3"/></svg>
</div>
<div class="a" style="left:234px;top:0;width:3px;height:612px;background:#e4e3f4"></div>
<div class="a" style="left:237px;top:0;width:835px;height:449px;background:#fff;border-radius:4px 0 0 4px;overflow:hidden">
<div class="a" style="left:0;top:0;width:835px;height:20px;background:linear-gradient(#d2d4e6,#d2deec 8%,#d1dfed 50%,#cedcea 90%,#c2cad4)"></div>
<div class="a" style="left:316px;top:0;width:58px;height:21px;background:#fff;border-radius:5px 5px 0 0"></div>
<div class="a" style="left:5.0px;top:5.2px"><svg width="8" height="10" viewBox="0 0 8 10"><path d="M.5.5h4.6l2.4 2.4v6.6H.5z" fill="#e6f4ec" stroke="#8a9a8a" stroke-width=".8"/><path d="M5 .6v2.4h2.4" fill="none" stroke="#9aa89a" stroke-width=".6"/><path d="M2.4 8.2V3h1.6a1.3 1.3 0 010 2.6H2.4" fill="none" stroke="#3a9a80" stroke-width="1.1"/></svg></div>
<div class="a tab" style="left:16.6px;top:4.6px">Main</div>
<div class="a" style="left:63.5px;top:5.2px"><svg width="8" height="10" viewBox="0 0 8 10"><path d="M.5.5h4.6l2.4 2.4v6.6H.5z" fill="#e6f4ec" stroke="#8a9a8a" stroke-width=".8"/><path d="M5 .6v2.4h2.4" fill="none" stroke="#9aa89a" stroke-width=".6"/><path d="M2.4 8.2V3h1.6a1.3 1.3 0 010 2.6H2.4" fill="none" stroke="#3a9a80" stroke-width="1.1"/></svg></div>
<div class="a tab" style="left:75.0px;top:4.6px">pd_set</div>
<div class="a" style="left:128.8px;top:5.2px"><svg width="8" height="10" viewBox="0 0 8 10"><path d="M.5.5h4.6l2.4 2.4v6.6H.5z" fill="#e6f4ec" stroke="#8a9a8a" stroke-width=".8"/><path d="M5 .6v2.4h2.4" fill="none" stroke="#9aa89a" stroke-width=".6"/><path d="M2.4 8.2V3h1.6a1.3 1.3 0 010 2.6H2.4" fill="none" stroke="#3a9a80" stroke-width="1.1"/></svg></div>
<div class="a tab" style="left:140.0px;top:4.6px">excel_oper</div>
<div class="a" style="left:215.5px;top:5.2px"><svg width="8" height="10" viewBox="0 0 8 10"><path d="M.5.5h4.6l2.4 2.4v6.6H.5z" fill="#e6f4ec" stroke="#8a9a8a" stroke-width=".8"/><path d="M5 .6v2.4h2.4" fill="none" stroke="#9aa89a" stroke-width=".6"/><path d="M2.4 8.2V3h1.6a1.3 1.3 0 010 2.6H2.4" fill="none" stroke="#3a9a80" stroke-width="1.1"/></svg></div>
<div class="a tab" style="left:227.0px;top:4.6px">functionalTest</div>
<div class="a" style="left:320.0px;top:5.2px"><svg width="8" height="10" viewBox="0 0 8 10"><path d="M.5.5h4.6l2.4 2.4v6.6H.5z" fill="#e6f4ec" stroke="#8a9a8a" stroke-width=".8"/><path d="M5 .6v2.4h2.4" fill="none" stroke="#9aa89a" stroke-width=".6"/><path d="M2.4 8.2V3h1.6a1.3 1.3 0 010 2.6H2.4" fill="none" stroke="#3a9a80" stroke-width="1.1"/></svg></div>
<div class="a tab" style="left:331.5px;top:4.6px">main</div>
<div class="a" style="left:378.0px;top:5.2px"><svg width="8" height="10" viewBox="0 0 8 10"><path d="M.5.5h4.6l2.4 2.4v6.6H.5z" fill="#e6f4ec" stroke="#8a9a8a" stroke-width=".8"/><path d="M5 .6v2.4h2.4" fill="none" stroke="#9aa89a" stroke-width=".6"/><path d="M2.4 8.2V3h1.6a1.3 1.3 0 010 2.6H2.4" fill="none" stroke="#3a9a80" stroke-width="1.1"/></svg></div>
<div class="a tab" style="left:389.7px;top:4.6px">trainer</div>
<div class="a" style="left:445.0px;top:5.2px"><svg width="8" height="10" viewBox="0 0 8 10"><path d="M.5.5h4.6l2.4 2.4v6.6H.5z" fill="#e6f4ec" stroke="#8a9a8a" stroke-width=".8"/><path d="M5 .6v2.4h2.4" fill="none" stroke="#9aa89a" stroke-width=".6"/><path d="M2.4 8.2V3h1.6a1.3 1.3 0 010 2.6H2.4" fill="none" stroke="#3a9a80" stroke-width="1.1"/></svg></div>
<div class="a tab" style="left:456.4px;top:4.6px">model</div>
<div class="a" style="left:510.2px;top:5.2px"><svg width="8" height="10" viewBox="0 0 8 10"><path d="M.5.5h4.6l2.4 2.4v6.6H.5z" fill="#e6f4ec" stroke="#8a9a8a" stroke-width=".8"/><path d="M5 .6v2.4h2.4" fill="none" stroke="#9aa89a" stroke-width=".6"/><path d="M2.4 8.2V3h1.6a1.3 1.3 0 010 2.6H2.4" fill="none" stroke="#3a9a80" stroke-width="1.1"/></svg></div>
<div class="a tab" style="left:521.1px;top:4.6px">module</div>
<div class="a" style="left:582.5px;top:5.2px"><svg width="8" height="10" viewBox="0 0 8 10"><path d="M.5.5h4.6l2.4 2.4v6.6H.5z" fill="#e6f4ec" stroke="#8a9a8a" stroke-width=".8"/><path d="M5 .6v2.4h2.4" fill="none" stroke="#9aa89a" stroke-width=".6"/><path d="M2.4 8.2V3h1.6a1.3 1.3 0 010 2.6H2.4" fill="none" stroke="#3a9a80" stroke-width="1.1"/></svg></div>
<div class="a tab" style="left:593.4px;top:4.6px">test</div>
<svg class="a" style="left:361px;top:7px" width="8" height="8" viewBox="0 0 8 8"><path d="M1.2 1.2l5.6 5.6M6.8 1.2L1.2 6.8" stroke="#8a8a8a" stroke-width="2.4" stroke-linecap="round"/><path d="M1.2 1.2l5.6 5.6M6.8 1.2L1.2 6.8" stroke="#fff" stroke-width="1" stroke-linecap="round"/></svg>
<div class="a" style="left:0;top:20px;width:10px;height:429px;background:#fafafb"></div>
<div class="ln num" style="left:18.0px;top:22.60px">5</div>
<div class="ln" style="left:34px;top:22.60px"><span class="kw">import</span> torch.nn.functional <span class="kw">as</span> F</div>
<div class="ln num" style="left:18.0px;top:38.60px">6</div>
<div class="ln" style="left:34px;top:38.60px"><span class="kw">from</span> torch.optim <span class="kw">import</span> Adam</div>
<div class="ln num" style="left:18.0px;top:54.60px">7</div>
<div class="ln" style="left:34px;top:54.60px"><span class="kw">import</span> torch</div>
<div class="ln num" style="left:18.0px;top:70.60px">8</div>
<div class="ln" style="left:34px;top:70.60px"><span class="kw">from</span> trainer <span class="kw">import</span> train</div>
<div class="ln num" style="left:18.0px;top:86.60px">9</div>
<div class="ln" style="left:34px;top:86.60px"><span class="kw">from</span> model <span class="kw">import</span> AnomalyAE</div>
<div class="ln num" style="left:10.0px;top:102.60px">10</div>
<div class="ln" style="left:34px;top:102.60px"><span class="kw">from</span> datetime <span class="kw">import</span> datetime</div>
<div class="ln num" style="left:10.0px;top:118.60px">11</div>
<div class="ln" style="left:34px;top:118.60px"></div>
<div class="a" style="left:33.5px;top:132.2px;width:801px;height:15.6px;background:#e8f1fb"></div>
<div class="ln num" style="left:10.0px;top:134.60px">12</div>
<div class="ln" style="left:34px;top:134.60px"><span class="cm">#pip install pytorch-</span><span style="background:#0a78d6;color:#fff">ignite</span></div>
<div class="ln num" style="left:10.0px;top:150.60px">13</div>
<div class="ln" style="left:34px;top:150.60px"></div>
<div class="ln num" style="left:10.0px;top:166.60px">14</div>
<div class="ln" style="left:34px;top:166.60px"><span class="kw">def</span> <b>create_datagen</b>(data_dir, batch_size=<span class="nm">8</span>):</div>
<div class="ln num" style="left:10.0px;top:182.60px">15</div>
<div class="ln" style="left:34px;top:182.60px">    transform = Compose([Grayscale(), ToTensor()])</div>
<div class="ln num" style="left:10.0px;top:198.60px">16</div>
<div class="ln" style="left:34px;top:198.60px">    dataset = ImageFolder(data_dir, transform=transform)</div>
<div class="ln num" style="left:10.0px;top:214.60px">17</div>
<div class="ln" style="left:34px;top:214.60px">    dataloader = DataLoader(dataset,</div>
<div class="ln num" style="left:10.0px;top:230.60px">18</div>
<div class="ln" style="left:34px;top:230.60px">                            batch_size=batch_size,</div>
<div class="ln num" style="left:10.0px;top:246.60px">19</div>
<div class="ln" style="left:34px;top:246.60px">                            shuffle=<span class="kw">True</span>,</div>
<div class="ln num" style="left:10.0px;top:262.60px">20</div>
<div class="ln" style="left:34px;top:262.60px">                            num_workers=<span class="nm">0</span>)</div>
<div class="ln num" style="left:10.0px;top:278.60px">21</div>
<div class="ln" style="left:34px;top:278.60px">    <span class="kw">return</span> dataloader</div>
<div class="ln num" style="left:10.0px;top:294.60px">22</div>
<div class="ln" style="left:34px;top:294.60px"></div>
<div class="ln num" style="left:10.0px;top:310.60px">23</div>
<div class="ln" style="left:34px;top:310.60px"></div>
<div class="ln num" style="left:10.0px;top:326.60px">24</div>
<div class="ln" style="left:34px;top:326.60px"><span class="kw">if</span> __name__ == <span class="str">"__main__"</span>:</div>
<div class="ln num" style="left:10.0px;top:342.60px">25</div>
<div class="ln" style="left:34px;top:342.60px">    parser = argparse.ArgumentParser()</div>
<div class="ln num" style="left:10.0px;top:358.60px">26</div>
<div class="ln" style="left:34px;top:358.60px">    parser.add_argument(<span class="str">'--train_dir'</span>,</div>
<div class="ln num" style="left:10.0px;top:374.60px">27</div>
<div class="ln" style="left:34px;top:374.60px">                        required=<span class="kw">True</span>,</div>
<div class="ln num" style="left:10.0px;top:390.60px">28</div>
<div class="ln" style="left:34px;top:390.60px">                        help=<span class="str">"Please specify the train directory"</span>)</div>
<div class="ln num" style="left:10.0px;top:406.60px">29</div>
<div class="ln" style="left:34px;top:406.60px">    parser.add_argument(<span class="str">'--val_dir'</span>,</div>
<div class="ln num" style="left:10.0px;top:422.60px">30</div>
<div class="ln" style="left:34px;top:422.60px">                        required=<span class="kw">True</span>,</div>
<div class="guide" style="left:67px;top:229px;height:48px"></div>
<div class="guide" style="left:99px;top:229px;height:48px"></div>
<div class="guide" style="left:131px;top:229px;height:48px"></div>
<div class="guide" style="left:163px;top:229px;height:48px"></div>
<div class="guide" style="left:195px;top:229px;height:48px"></div>
<div class="guide" style="left:227px;top:229px;height:48px"></div>
<div class="guide" style="left:67px;top:373px;height:16px"></div>
<div class="guide" style="left:99px;top:373px;height:16px"></div>
<div class="guide" style="left:131px;top:373px;height:16px"></div>
<div class="guide" style="left:163px;top:373px;height:16px"></div>
<div class="guide" style="left:195px;top:373px;height:16px"></div>
<div class="guide" style="left:67px;top:389px;height:16px"></div>
<div class="guide" style="left:99px;top:389px;height:16px"></div>
<div class="guide" style="left:131px;top:389px;height:16px"></div>
<div class="guide" style="left:163px;top:389px;height:16px"></div>
<div class="guide" style="left:195px;top:389px;height:16px"></div>
<div class="guide" style="left:67px;top:421px;height:16px"></div>
<div class="guide" style="left:99px;top:421px;height:16px"></div>
<div class="guide" style="left:131px;top:421px;height:16px"></div>
<div class="guide" style="left:163px;top:421px;height:16px"></div>
<div class="guide" style="left:195px;top:421px;height:16px"></div>
<svg class="a" style="left:25.5px;top:170px" width="6" height="6" viewBox="0 0 6 6"><circle cx="3" cy="3" r="2.7" fill="#dfe6ee" stroke="#b8c4d0" stroke-width=".5"/><path d="M1.6 3h2.8" stroke="#8090a0" stroke-width=".7"/></svg>
<svg class="a" style="left:42px;top:146.5px" width="24" height="3" viewBox="0 0 24 3"><path d="M0 2.5l1.5-2 1.5 2 1.5-2 1.5 2 1.5-2 1.5 2 1.5-2 1.5 2 1.5-2 1.5 2 1.5-2 1.5 2 1.5-2 1.5 2 1.5-2 1.5 2" fill="none" stroke="#e0a0a0" stroke-width=".7"/></svg>
<svg class="a" style="left:138px;top:146.5px" width="56" height="3" viewBox="0 0 56 3"><path d="M0 2.5 l1.5 -2 l1.5 2 l1.5 -2 l1.5 2 l1.5 -2 l1.5 2 l1.5 -2 l1.5 2 l1.5 -2 l1.5 2 l1.5 -2 l1.5 2 l1.5 -2 l1.5 2 l1.5 -2 l1.5 2 l1.5 -2 l1.5 2 l1.5 -2 l1.5 2 l1.5 -2 l1.5 2 l1.5 -2 l1.5 2 l1.5 -2 l1.5 2 l1.5 -2 l1.5 2 l1.5 -2 l1.5 2 l1.5 -2 l1.5 2 l1.5 -2 l1.5 2 l1.5 -2 l1.5 2 l1.5 -2 l1.5 2" fill="none" stroke="#e0a0a0" stroke-width=".7"/></svg>
<div class="a" style="left:32px;top:438px;width:803px;height:10px;background:#f1f1f1"></div>
<svg class="a" style="left:35.5px;top:439.5px" width="5" height="7" viewBox="0 0 5 7"><path d="M4 .8L1.2 3.5 4 6.2" fill="none" stroke="#b8b8b8" stroke-width="1"/></svg>
</div>
<div class="a" style="left:237px;top:449px;width:835px;height:4px;background:#e4e3f3"></div>
<div class="a" style="left:237px;top:453px;width:835px;height:159px;background:#fff;border-top-left-radius:4px;overflow:hidden">
<div class="a" style="left:0;top:0;width:835px;height:20px;background:#f1f2fa"></div>
<div class="a" style="left:0;top:0;width:74px;height:20px;background:#e9ebf5;border-top-right-radius:5px"></div>
<svg class="a" style="left:4px;top:5.5px" width="10" height="10" viewBox="0 0 10 10"><rect x=".7" y=".7" width="8.4" height="6" rx=".6" fill="#e4ebf4" stroke="#3e5680" stroke-width="1.3"/><path d="M2.6 4.6h4.6" stroke="#7088a8" stroke-width=".8"/><path d="M2.2 9.2h5.4" stroke="#3e5680" stroke-width="1.4"/><path d="M4.9 6.8v2" stroke="#3e5680" stroke-width="1.2"/></svg>
<div class="a tab" style="left:16.5px;top:5px;font-size:10.8px;color:#222">Console</div>
<svg class="a" style="left:62px;top:6.5px" width="8" height="8" viewBox="0 0 8 8"><path d="M1.2 1.2l5.6 5.6M6.8 1.2L1.2 6.8" stroke="#8a8a8a" stroke-width="2.4" stroke-linecap="round"/><path d="M1.2 1.2l5.6 5.6M6.8 1.2L1.2 6.8" stroke="#fff" stroke-width="1" stroke-linecap="round"/></svg>
<svg class="a" style="left:78.5px;top:6px" width="10" height="9" viewBox="0 0 10 9"><rect x=".3" y="1.2" width="8.4" height="2.8" fill="#c4ccc4"/><rect x=".3" y="1.2" width="4" height="2.8" fill="#9cc49c"/><rect x="4.6" y="4.4" width="4.6" height="4" rx="1.2" fill="#dff0df" stroke="#6aaa6a" stroke-width=".8"/></svg>
<div class="a tab" style="left:90.5px;top:5px;font-size:10.8px;color:#a0a0a0">Progress</div>
<svg class="a" style="left:141px;top:5.5px" width="9" height="10" viewBox="0 0 9 10"><path d="M1.2 8.5V1h2.2a1.6 1.6 0 010 3.2H1.2" fill="none" stroke="#78b078" stroke-width="1"/><path d="M4.6 4.6v2.8q0 1.4 1.2 1.4t1.2-1.4V4.6" fill="none" stroke="#e090a0" stroke-width="1"/></svg>
<div class="a tab" style="left:154px;top:5px;font-size:10.8px;color:#a0a0a0">PyUnit</div>
<div class="a" style="left:775.5px;top:5px;width:7px;height:8px;background:#b8b8b8;border:1px solid #d0d0d0"></div>
<svg class="a" style="left:790px;top:4px" width="10" height="10" viewBox="0 0 10 10"><path d="M1.5 1.5l7 7M8.5 1.5l-7 7" stroke="#9a9a9a" stroke-width="3"/><path d="M1.5 1.5l7 7M8.5 1.5l-7 7" stroke="#686868" stroke-width="2"/></svg>
<svg class="a" style="left:805px;top:3.5px" width="11" height="11" viewBox="0 0 11 11"><path d="M1 1l5.5 5.5M6.5 1L1 6.5" stroke="#9a9a9a" stroke-width="1.8"/><path d="M4 4l6 6M10 4l-6 6" stroke="#606060" stroke-width="2"/></svg>
<svg class="a" style="left:820px;top:3px" width="12" height="12" viewBox="0 0 12 12"><circle cx="4.6" cy="4.6" r="3.7" fill="#d8ecd8" stroke="#3a8a3a" stroke-width="1.4"/><path d="M3.6 2.6v4l3-2z" fill="#3a9a3a"/><path d="M6.6 8.6l2.2-1.8 2.6 2.2-2.2 2z" fill="#f2d870" stroke="#b89838" stroke-width=".6"/></svg>
<div class="a" style="left:2.8px;top:22.8px;font-size:8.8px;color:#1a1a1a;-webkit-text-stroke:.15px #1a1a1a;white-space:nowrap;line-height:10px">&lt;terminated&gt; test.py [D:\ProgramData\Anaconda3\envs\keras\python.exe]</div>
<div class="a" style="left:0;top:33px;width:835px;height:1px;background:#b8b8b8"></div>
</div>
<div class="a" style="left:0;top:560px;width:1072px;height:52px;background:linear-gradient(rgba(0,0,0,0),rgba(0,0,0,.19))"></div>
</body></html>
